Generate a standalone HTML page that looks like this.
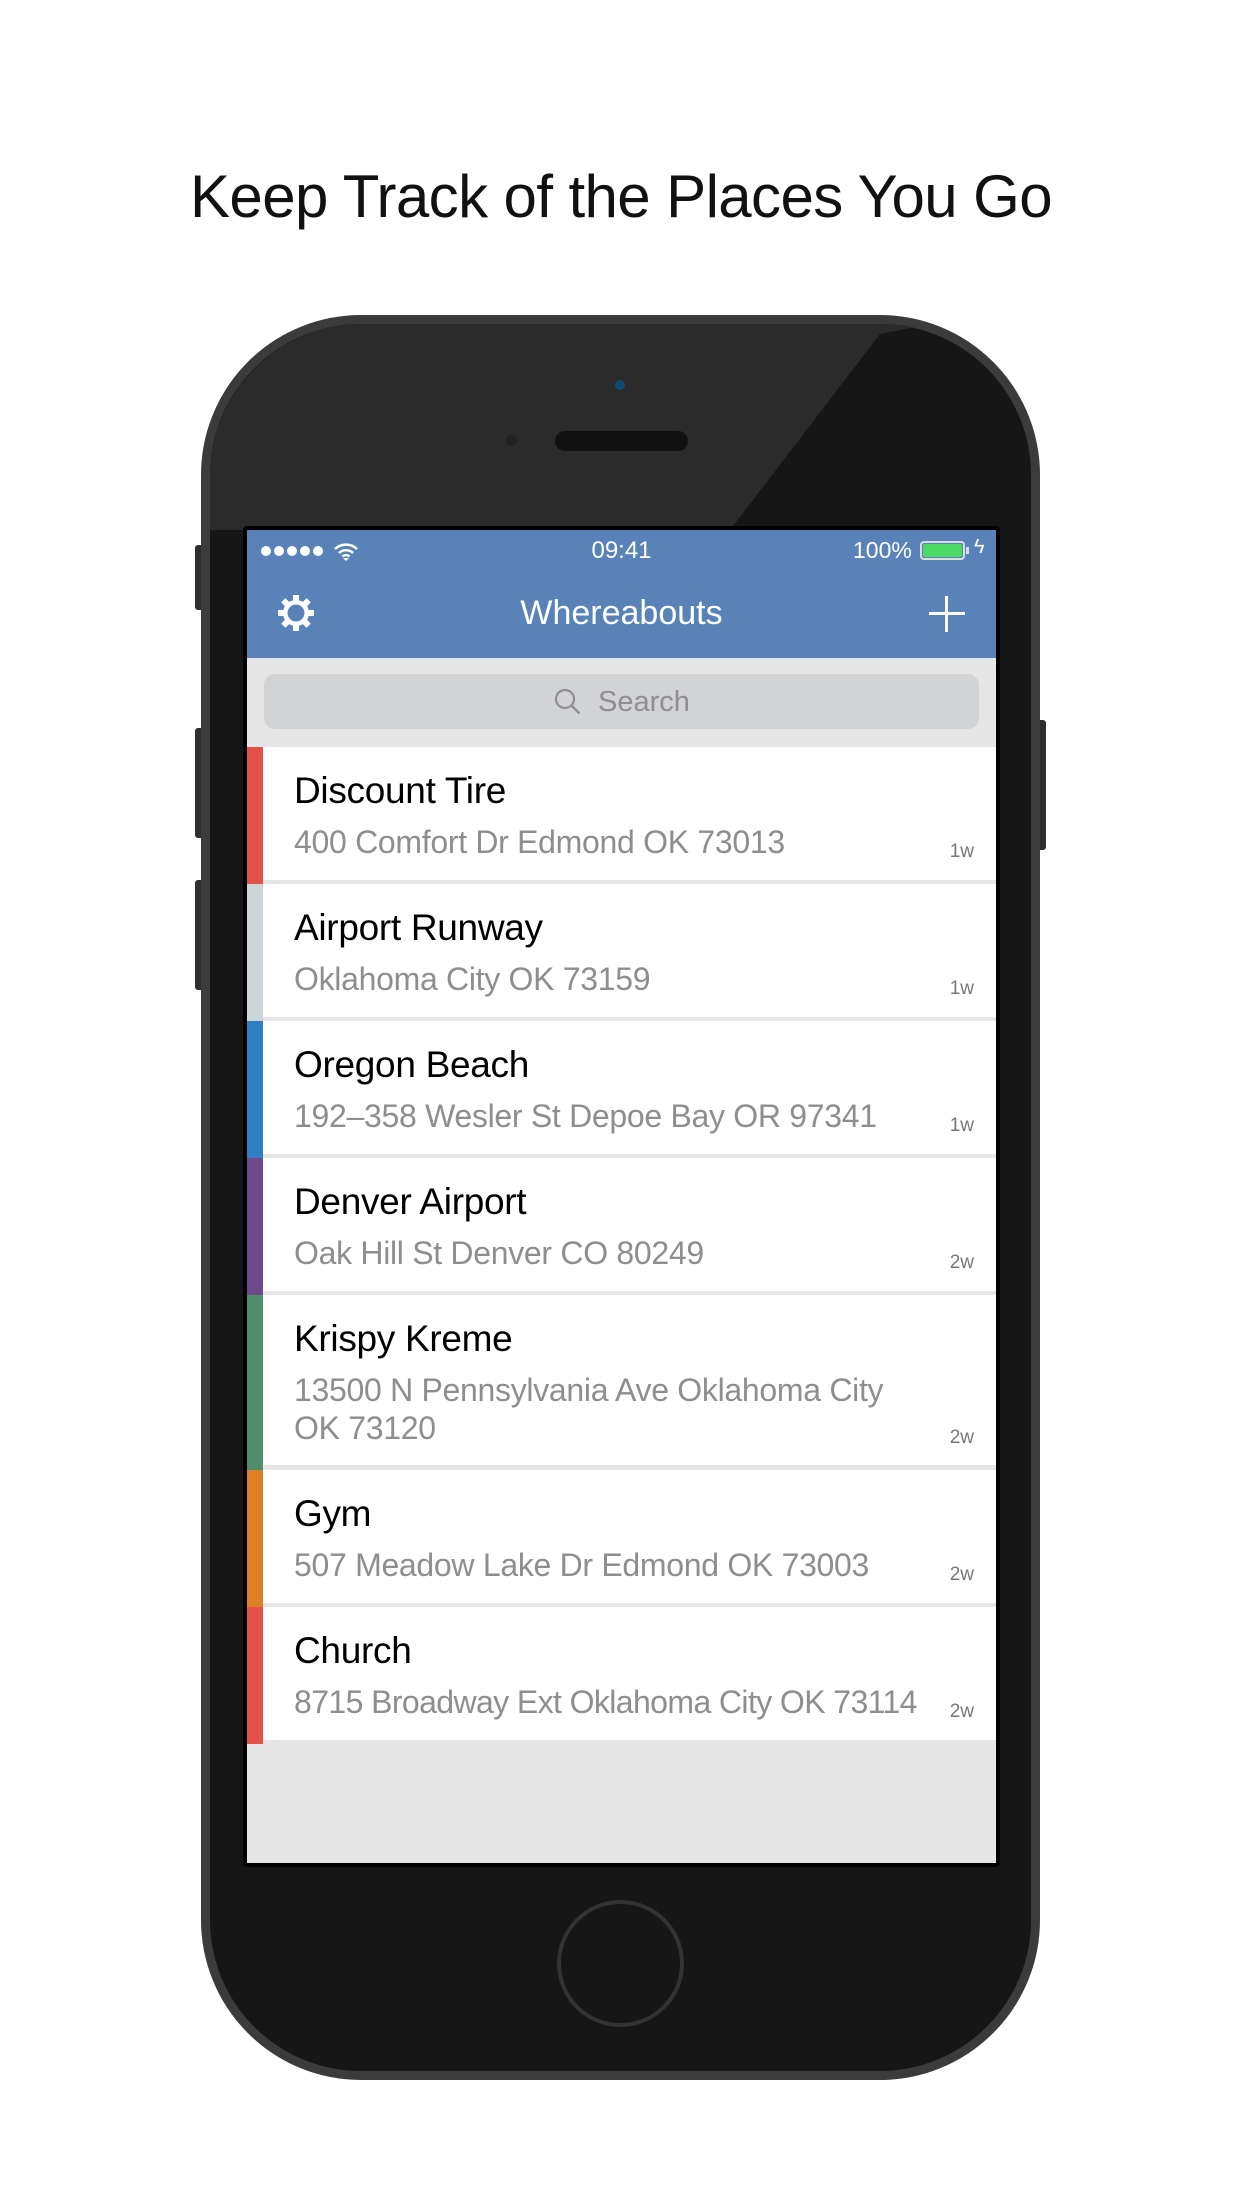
<!DOCTYPE html>
<html><head><meta charset="utf-8"><style>
*{margin:0;padding:0;box-sizing:border-box}
body{width:1242px;height:2208px;background:#fff;position:relative;overflow:hidden;font-family:"Liberation Sans",sans-serif}
.abs{position:absolute}
h1{position:absolute;top:162px;left:0;width:1242px;text-align:center;font-weight:normal;font-size:60px;color:#111;letter-spacing:-0.6px}
.phone{left:201px;top:315px;width:839px;height:1765px;border-radius:160px;background:#161616;border:9px solid #3b3b3b}
.shine{left:210px;top:324px;width:821px;height:206px;border-radius:152px 152px 0 0;background:#2b2b2b;clip-path:polygon(0 0,720px 0,670px 10px,520px 206px,0 206px)}
.screen{left:247px;top:530px;width:749px;height:1333px;background:#e6e6e6;overflow:hidden}
.nav{left:0;top:0;width:749px;height:128px;background:#5983b8;color:#fff}
.row{position:absolute;left:0;width:749px;background:#fff}
.bar{position:absolute;left:0;top:0;width:16px;height:100%}
.t{position:absolute;left:47px;font-size:37px;color:#000;letter-spacing:-0.3px}
.a{position:absolute;left:47px;font-size:32px;color:#8e8e8e;line-height:38px;white-space:nowrap;letter-spacing:-0.3px}
.w{position:absolute;right:22px;font-size:19px;color:#777}
.d{position:absolute;top:16px;width:10px;height:10px;border-radius:50%;background:#fff}
</style></head><body>
<h1>Keep Track of the Places You Go</h1>
<div class="abs" style="left:195px;top:545px;width:10px;height:65px;background:#2e2e2e;border-radius:3px"></div>
<div class="abs" style="left:195px;top:728px;width:10px;height:110px;background:#2e2e2e;border-radius:3px"></div>
<div class="abs" style="left:195px;top:880px;width:10px;height:110px;background:#2e2e2e;border-radius:3px"></div>
<div class="abs" style="left:1036px;top:720px;width:10px;height:130px;background:#2e2e2e;border-radius:3px"></div>
<div class="abs phone"></div>
<div class="abs shine"></div>
<div class="abs" style="left:612px;top:377px;width:16px;height:16px;border-radius:50%;background:#0f4a75;border:3px solid #2a2a2a"></div>
<div class="abs" style="left:555px;top:431px;width:133px;height:20px;border-radius:10px;background:#111"></div>
<div class="abs" style="left:506px;top:435px;width:11px;height:11px;border-radius:50%;background:#222"></div>
<div class="abs" style="left:243px;top:526px;width:757px;height:1341px;background:#000;border-radius:4px"></div>
<div class="abs screen">
 <div class="abs nav">
  <div class="d" style="left:14px"></div><div class="d" style="left:27px"></div><div class="d" style="left:40px"></div><div class="d" style="left:53px"></div><div class="d" style="left:66px"></div>
  <svg class="abs" style="left:86px;top:12px" width="26" height="20" viewBox="0 0 26 20"><path d="M2 7a16 16 0 0 1 22 0M6 11a10 10 0 0 1 14 0M9.5 14.5a5 5 0 0 1 7 0" stroke="#fff" stroke-width="2.4" fill="none"/><path d="M13 19l-3-3h6z" fill="#fff"/></svg>
  <div class="abs" style="left:0;width:749px;top:7px;text-align:center;font-size:24px">09:41</div>
  <div class="abs" style="left:606px;top:7px;font-size:23px">100%</div>
  <div class="abs" style="left:673px;top:11px;width:45px;height:19px;border:2px solid #ddd;border-radius:4px;padding:1px"><div style="width:100%;height:100%;background:#4cd964;border-radius:2px"></div></div>
  <div class="abs" style="left:719px;top:17px;width:3px;height:7px;background:#ddd"></div>
  <div class="abs" style="left:727px;top:6px;font-size:20px">ϟ</div>
  <svg class="abs" style="left:31px;top:65px" width="36" height="36" viewBox="0 0 36 36"><g fill="#fff"><rect x="15" y="0" width="6" height="36"/><rect x="15" y="0" width="6" height="36" transform="rotate(45 18 18)"/><rect x="15" y="0" width="6" height="36" transform="rotate(90 18 18)"/><rect x="15" y="0" width="6" height="36" transform="rotate(135 18 18)"/></g><circle cx="18" cy="18" r="13" fill="#fff"/><circle cx="18" cy="18" r="8.5" fill="#5983b8"/></svg>
  <div class="abs" style="left:0;width:749px;top:64px;text-align:center;font-size:34px">Whereabouts</div>
  <div class="abs" style="left:698px;top:66px;width:3px;height:36px;background:#fff"></div>
  <div class="abs" style="left:682px;top:82px;width:36px;height:3px;background:#fff"></div>
 </div>
 <div class="abs" style="left:17px;top:144px;width:715px;height:55px;background:#d2d3d5;border-radius:11px"></div>
 <svg class="abs" style="left:307px;top:158px" width="28" height="28" viewBox="0 0 28 28"><circle cx="11" cy="11" r="9" stroke="#8e8e93" stroke-width="2.2" fill="none"/><path d="M17.5 17.5l8 8" stroke="#8e8e93" stroke-width="2.4"/></svg>
 <div class="abs" style="left:351px;top:156px;font-size:29px;color:#8e8e93">Search</div>

 <div class="row" style="top:217px;height:133px"><div class="bar" style="background:#e5504a;height:137px"></div><div class="t" style="top:23px">Discount Tire</div><div class="a" style="top:76px">400 Comfort Dr Edmond OK 73013</div><div class="w" style="top:94px">1w</div></div>
 <div class="row" style="top:354px;height:133px"><div class="bar" style="background:#ccd6d6;height:137px"></div><div class="t" style="top:23px">Airport Runway</div><div class="a" style="top:76px">Oklahoma City OK 73159</div><div class="w" style="top:94px">1w</div></div>
 <div class="row" style="top:491px;height:133px"><div class="bar" style="background:#2f80c1;height:137px"></div><div class="t" style="top:23px">Oregon Beach</div><div class="a" style="top:76px">192–358 Wesler St Depoe Bay OR 97341</div><div class="w" style="top:94px">1w</div></div>
 <div class="row" style="top:628px;height:133px"><div class="bar" style="background:#6c4a8b;height:137px"></div><div class="t" style="top:23px">Denver Airport</div><div class="a" style="top:76px">Oak Hill St Denver CO 80249</div><div class="w" style="top:94px">2w</div></div>
 <div class="row" style="top:765px;height:170px"><div class="bar" style="background:#4f8d6c;height:175px"></div><div class="t" style="top:23px">Krispy Kreme</div><div class="a" style="top:76px">13500 N Pennsylvania Ave Oklahoma City<br>OK 73120</div><div class="w" style="top:132px">2w</div></div>
 <div class="row" style="top:940px;height:133px"><div class="bar" style="background:#e08024;height:137px"></div><div class="t" style="top:23px">Gym</div><div class="a" style="top:76px">507 Meadow Lake Dr Edmond OK 73003</div><div class="w" style="top:94px">2w</div></div>
 <div class="row" style="top:1077px;height:133px"><div class="bar" style="background:#e5504a;height:137px"></div><div class="t" style="top:23px">Church</div><div class="a" style="top:76px;letter-spacing:-0.6px">8715 Broadway Ext Oklahoma City OK 73114</div><div class="w" style="top:94px">2w</div></div>
</div>
<div class="abs" style="left:557px;top:1900px;width:127px;height:127px;border-radius:50%;border:4px solid #333"></div>
</body></html>
